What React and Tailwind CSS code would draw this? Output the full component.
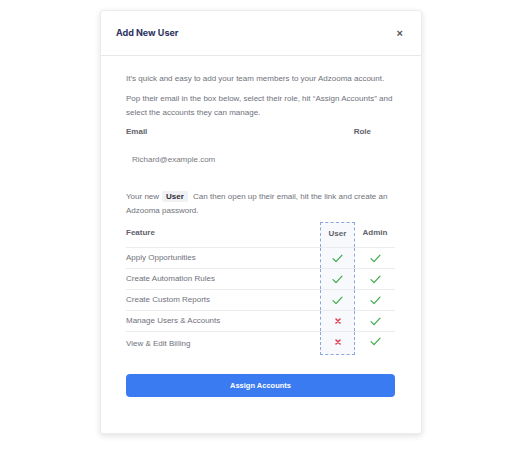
import React from 'react';

const features = [
  { name: 'Apply Opportunities', user: true, admin: true },
  { name: 'Create Automation Rules', user: true, admin: true },
  { name: 'Create Custom Reports', user: true, admin: true },
  { name: 'Manage Users & Accounts', user: false, admin: true },
  { name: 'View & Edit Billing', user: false, admin: true },
];

const Check = () => (
  <svg width="11" height="9" viewBox="0 0 11 9" fill="none">
    <path d="M1 4.6 L4 7.6 L10 1.2" stroke="#3bab4a" strokeWidth="1.2" strokeLinecap="round" strokeLinejoin="round" />
  </svg>
);

const Cross = () => (
  <svg width="6" height="6" viewBox="0 0 6 6" fill="none">
    <path d="M1 1 L5 5 M5 1 L1 5" stroke="#e0404f" strokeWidth="1.6" strokeLinecap="round" />
  </svg>
);

const App = () => {
  return (
    <div className="w-[522px] h-[450px] bg-white font-['Liberation_Sans',Arial,sans-serif] pt-[10px]">
      <div className="ml-[100px] w-[322px] h-[424px] bg-white border border-[#ececec] rounded-[3px] shadow-[0_2px_6px_rgba(0,0,0,0.12)]">
        {/* header */}
        <div className="h-[45px] flex items-center justify-between pl-[15px] pr-[18px] border-b border-[#e8e8e8]">
          <h2 className="text-[9px] font-bold text-[#2c3360] font-['Inter',sans-serif]">Add New User</h2>
          <span className="text-[11px] leading-none font-bold text-[#555]">×</span>
        </div>

        <div className="pt-[16px] pl-[25px] pr-[26px] text-[8px] leading-[14px] text-[#6f727b]">
          <p>It’s quick and easy to add your team members to your Adzooma account.</p>
          <p className="mt-[6px]">
            Pop their email in the box below, select their role, hit “Assign Accounts” and select the accounts they can manage.
          </p>

          <div className="mt-[5px] flex justify-between font-bold text-[#5f626b]">
            <span>Email</span>
            <span className="mr-[24px]">Role</span>
          </div>

          <div className="mt-[7px] h-[28px] flex items-center pl-[6px] text-[#777a82]">
            Richard@example.com
          </div>

          <p className="mt-[16px]">
            Your new
            <span className="inline-block mx-[3px] px-[4px] leading-[11px] bg-[#f1f1f3] rounded-[2px] font-bold text-[#2a2d35]">User</span>
            {' '}Can then open up their email, hit the link and create an Adzooma password.
          </p>

          <div className="mt-[4px]">
            <div className="grid grid-cols-[1fr_35px_40px] h-[26px] border-b border-[#ececec] font-bold text-[#5f626b]">
              <div className="pt-[4px]">Feature</div>
              <div className="pt-[4px] text-center bg-[#f8f9fd] border-x border-t border-dashed border-[#8fa6dc]">User</div>
              <div className="pt-[4px] text-center">Admin</div>
            </div>
            {features.map((f, i) => {
              const last = i === features.length - 1;
              return (
                <div
                  key={f.name}
                  className={
                    last
                      ? 'grid grid-cols-[1fr_35px_40px] h-[23px]'
                      : 'grid grid-cols-[1fr_35px_40px] h-[21px] border-b border-[#ececec]'
                  }
                >
                  <div className="flex items-center">{f.name}</div>
                  <div
                    className={
                      last
                        ? 'flex items-center justify-center pb-[2px] bg-[#f8f9fd] border-x border-b border-dashed border-[#8fa6dc]'
                        : 'flex items-center justify-center bg-[#f8f9fd] border-x border-dashed border-[#8fa6dc]'
                    }
                  >
                    {f.user ? <Check /> : <Cross />}
                  </div>
                  <div className={last ? 'flex items-center justify-center pb-[5px]' : 'flex items-center justify-center'}>
                    {f.admin ? <Check /> : <Cross />}
                  </div>
                </div>
              );
            })}
          </div>

          <button className="mt-[19px] w-full h-[23px] rounded-[4px] bg-[#3b7bf1] text-white text-[7.5px] font-bold">
            Assign Accounts
          </button>
        </div>
      </div>
    </div>
  );
};

export default App;
